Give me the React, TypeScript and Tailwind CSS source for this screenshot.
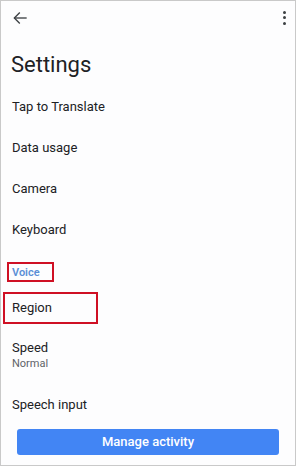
import React from "react";

export default function App() {
  const row = "h-[41px] flex items-center pl-[11px] text-[13px] text-[#202124]";
  return (
    <div
      className="relative w-[296px] h-[466px] overflow-hidden bg-[#fdfdfe] border border-[#c9c9c9]"
      style={{ fontFamily: "Roboto, 'Liberation Sans', sans-serif" }}
    >
      <div className="h-[32px] flex items-center justify-between pl-[11px] pr-[9px] pt-[1px]">
        <svg width="16" height="16" viewBox="0 0 24 24" fill="none" stroke="#3c4043" strokeWidth="2" strokeLinecap="square">
          <path d="M21 12H4" />
          <path d="M11 4.5L3.5 12L11 19.5" />
        </svg>
        <div className="flex flex-col gap-[2.5px]">
          <div className="w-[3px] h-[3px] rounded-full bg-[#3c4043]" />
          <div className="w-[3px] h-[3px] rounded-full bg-[#3c4043]" />
          <div className="w-[3px] h-[3px] rounded-full bg-[#3c4043]" />
        </div>
      </div>
      <div className="mt-[18px] h-[28px] leading-[28px] pl-[10px] text-[22px] text-[#202124]">Settings</div>
      <div className="mt-[7px] flex flex-col">
        <div className={row}>Tap to Translate</div>
        <div className={row}>Data usage</div>
        <div className={row}>Camera</div>
        <div className={row + " h-[40px]"}>Keyboard</div>
        <div className="relative pt-[16px] pb-[8px] pl-[11px]">
          <div className="leading-[14px] text-[11px] font-semibold text-[#5b8fd6]">Voice</div>
          <div className="absolute left-[6px] top-[12px] w-[47px] h-[20px] border-[2.5px] border-[#cf1024]" />
        </div>
        <div className="relative h-[40px] flex items-center pl-[11px] text-[13px] text-[#202124]">
          Region
          <div className="absolute left-[2px] top-[4px] w-[95px] h-[32px] border-[2.5px] border-[#cf1024]" />
        </div>
        <div className="h-[56px] pt-[11px] pl-[11px]">
          <div className="leading-[18px] text-[13px] text-[#202124]">Speed</div>
          <div className="leading-[14px] text-[11px] text-[#5f6368]">Normal</div>
        </div>
        <div className={row + " h-[40px]"}>Speech input</div>
      </div>
      <div className="mt-[4px] mx-[16px] h-[26px] rounded-[3px] bg-[#4285f4] flex items-center justify-center text-[13px] font-medium text-white">
        Manage activity
      </div>
    </div>
  );
}
